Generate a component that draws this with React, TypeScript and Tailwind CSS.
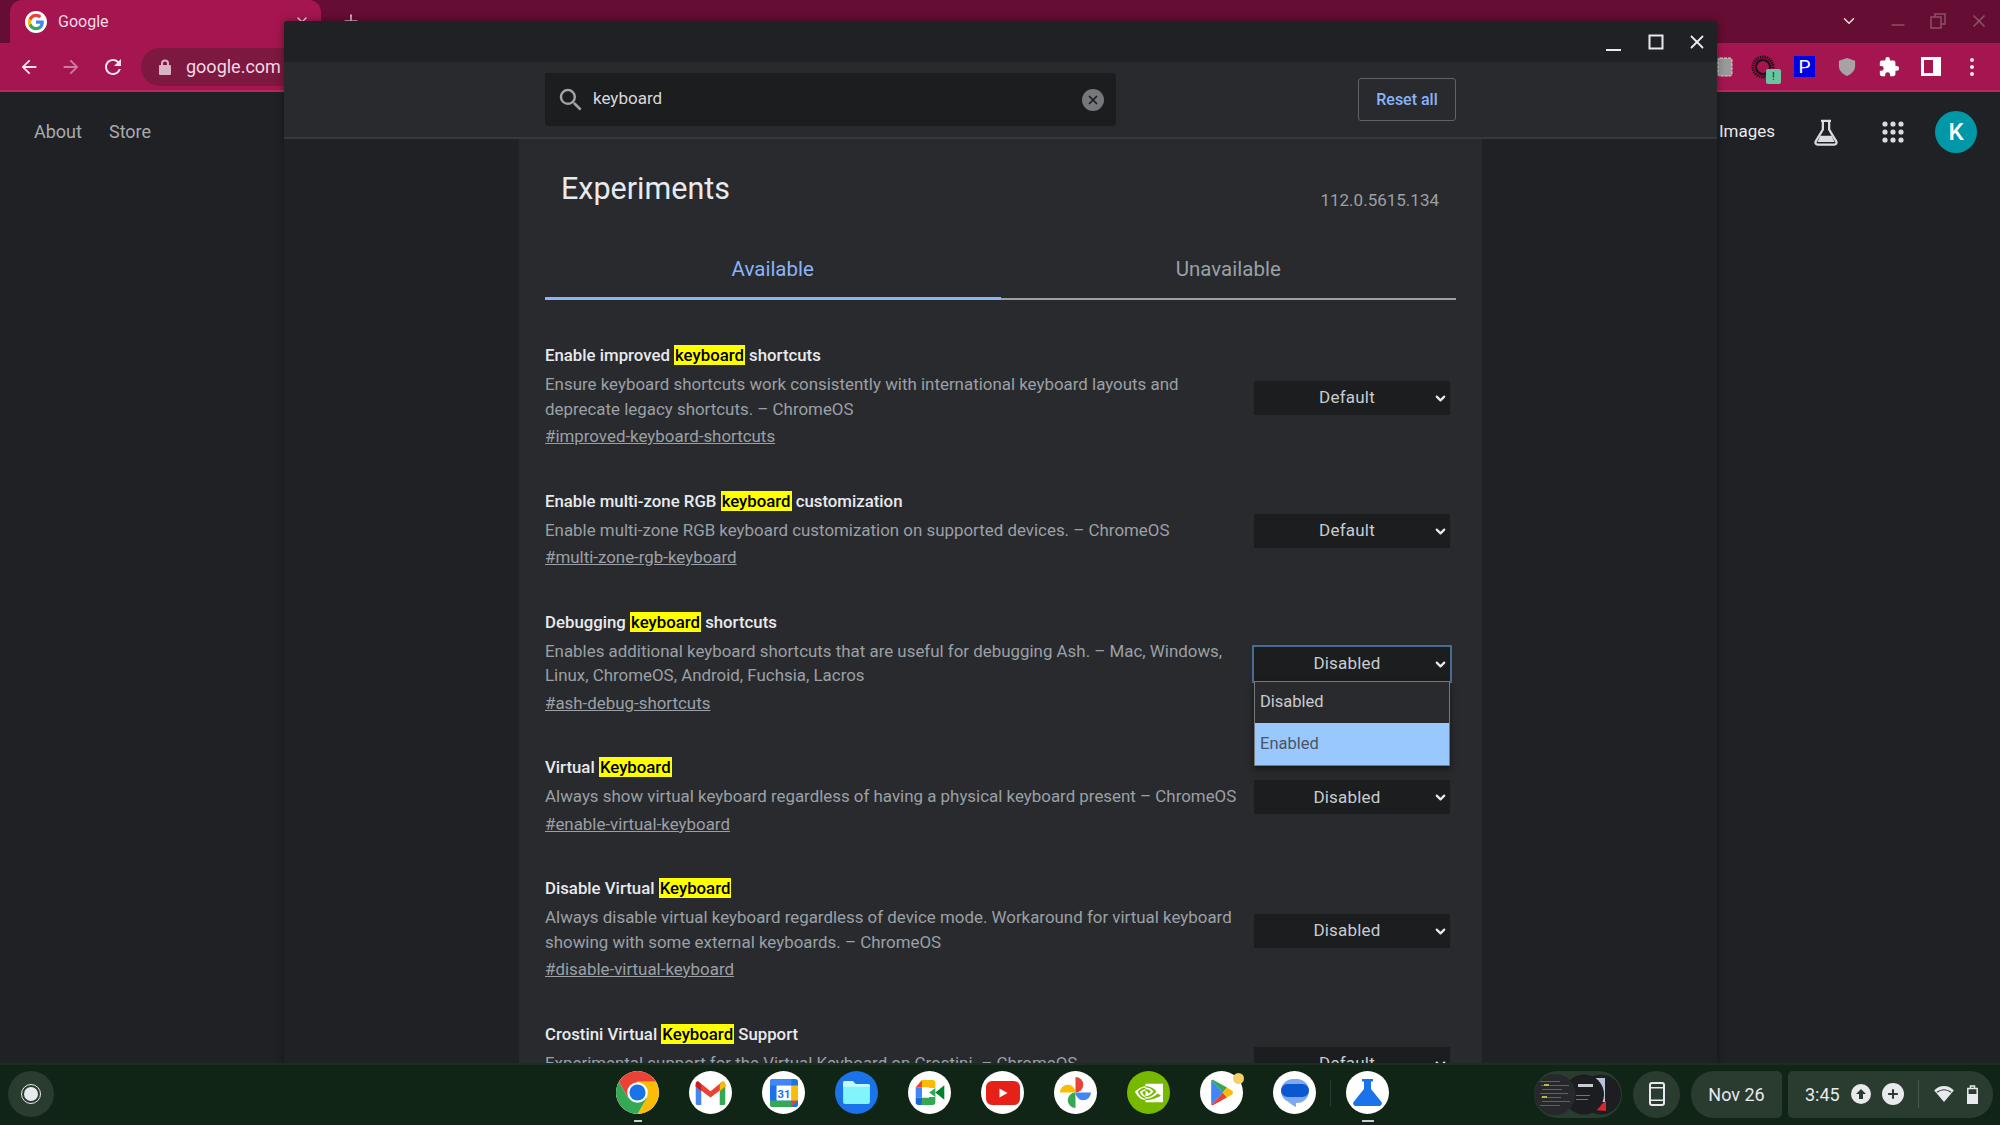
import React from "react";
import { ChevronDown, Minus, Plus, X } from "lucide-react";
import { SiNvidia } from "react-icons/si";

const experiments = [
  {
    before: "Enable improved ",
    mark: "keyboard",
    after: " shortcuts",
    desc: "Ensure keyboard shortcuts work consistently with international keyboard layouts and deprecate legacy shortcuts. – ChromeOS",
    link: "#improved-keyboard-shortcuts",
    value: "Default",
  },
  {
    before: "Enable multi-zone RGB ",
    mark: "keyboard",
    after: " customization",
    desc: "Enable multi-zone RGB keyboard customization on supported devices. – ChromeOS",
    link: "#multi-zone-rgb-keyboard",
    value: "Default",
  },
  {
    before: "Debugging ",
    mark: "keyboard",
    after: " shortcuts",
    desc: "Enables additional keyboard shortcuts that are useful for debugging Ash. – Mac, Windows, Linux, ChromeOS, Android, Fuchsia, Lacros",
    link: "#ash-debug-shortcuts",
    value: "Disabled",
    open: true,
  },
  {
    before: "Virtual ",
    mark: "Keyboard",
    after: "",
    desc: "Always show virtual keyboard regardless of having a physical keyboard present – ChromeOS",
    link: "#enable-virtual-keyboard",
    value: "Disabled",
  },
  {
    before: "Disable Virtual ",
    mark: "Keyboard",
    after: "",
    desc: "Always disable virtual keyboard regardless of device mode. Workaround for virtual keyboard showing with some external keyboards. – ChromeOS",
    link: "#disable-virtual-keyboard",
    value: "Disabled",
  },
  {
    before: "Crostini Virtual ",
    mark: "Keyboard",
    after: " Support",
    desc: "Experimental support for the Virtual Keyboard on Crostini. – ChromeOS",
    link: "#crostini-virtual-keyboard",
    value: "Default",
  },
];

function GoogleG({ size = 22 }: { size?: number }) {
  return (
    <svg width={size} height={size} viewBox="0 0 48 48">
      <circle cx="24" cy="24" r="24" fill="#fff" />
      <path fill="#4285F4" d="M41 24.400c0-1.300-.1-2.500-.3-3.700H24v7h9.600c-.4 2.200-1.700 4.100-3.500 5.400v4.500h5.700C39.100 34.500 41 29.900 41 24.400z" />
      <path fill="#34A853" d="M24 42c4.800 0 8.800-1.600 11.800-4.300l-5.700-4.500c-1.600 1.100-3.700 1.700-6.100 1.700-4.700 0-8.600-3.100-10-7.400H8.100v4.600C11 37.900 17 42 24 42z" />
      <path fill="#FBBC05" d="M14 27.500c-.4-1.100-.6-2.300-.6-3.500s.2-2.400.6-3.500v-4.600H8.100C6.800 18.300 6 21.100 6 24s.8 5.700 2.100 8.100l5.900-4.600z" />
      <path fill="#EA4335" d="M24 13.100c2.600 0 5 .9 6.800 2.700l5.100-5.100C32.800 7.800 28.800 6 24 6 17 6 11 10.100 8.100 15.900l5.900 4.600c1.400-4.300 5.300-7.400 10-7.400z" />
    </svg>
  );
}

function ShelfIcon({ children, bg = "bg-white" }: { children: React.ReactNode; bg?: string }) {
  return (
    <div className={`flex h-[43px] w-[43px] shrink-0 items-center justify-center overflow-hidden rounded-full ${bg}`}>
      {children}
    </div>
  );
}

function ChromeIcon() {
  return (
    <svg width="43" height="43" viewBox="0 0 48 48">
      <path fill="#EA4335" d="M3.200 12A24 24 0 0 1 44.800 12H24L13.600 30z" />
      <path fill="#FBBC05" d="M44.800 12A24 24 0 0 1 24 48L34.400 30 24 12z" />
      <path fill="#34A853" d="M24 48A24 24 0 0 1 3.200 12L13.600 30H34.400z" />
      <circle cx="24" cy="24" r="11.500" fill="#fff" />
      <circle cx="24" cy="24" r="9" fill="#1A73E8" />
    </svg>
  );
}

function GmailIcon() {
  return (
    <svg width="31" height="24" viewBox="0 0 32 26">
      <path fill="#4285F4" d="M0 4h6v22H2a2 2 0 0 1-2-2z" />
      <path fill="#34A853" d="M26 4h6v20a2 2 0 0 1-2 2h-4z" />
      <path fill="#EA4335" d="M0 3 3 .5 16 11 29 .5 32 3v3L16 18 0 6z" />
      <path fill="#FBBC05" d="M26 4l3-3.500C30.500-.5 32 1 32 3v3l-6 5z" />
      <path fill="#C5221F" d="M0 3C0 1 1.500-.5 3 .5L6 4v7L0 6z" />
    </svg>
  );
}

function CalendarIcon() {
  return (
    <svg width="28" height="28" viewBox="0 0 30 30">
      <rect x="0" y="0" width="30" height="30" rx="3" fill="#1A73E8" />
      <path fill="#34A853" d="M0 23h23v7H3a3 3 0 0 1-3-3z" />
      <path fill="#EA4335" d="M23 23h7l-7 7z" />
      <path fill="#FBBC05" d="M23 7h7v16h-7z" />
      <path fill="#4285F4" d="M0 3a3 3 0 0 1 3-3h20v7H0z" />
      <rect x="7" y="7" width="16" height="16" fill="#fff" />
      <text x="15" y="20" textAnchor="middle" fontFamily="Roboto" fontWeight="700" fontSize="12" fill="#1A73E8">31</text>
    </svg>
  );
}

function FilesIcon() {
  return (
    <svg width="27" height="23" viewBox="0 0 28 24">
      <path fill="#80F6FB" d="M2 0h8l3 3h13a2 2 0 0 1 2 2v17a2 2 0 0 1-2 2H2a2 2 0 0 1-2-2V2a2 2 0 0 1 2-2z" />
      <path fill="#C4FBFD" d="M2 0h8l3 3h13a2 2 0 0 1 2 2v1H0V2a2 2 0 0 1 2-2z" />
    </svg>
  );
}

function MeetIcon() {
  return (
    <svg width="30" height="25" viewBox="0 0 32 28">
      <path fill="#EA4335" d="M7 0v8H0z" />
      <path fill="#4285F4" d="M0 8h7v12H0z" />
      <path fill="#1967D2" d="M0 20h7v8H3a3 3 0 0 1-3-3z" />
      <path fill="#FBBC05" d="M7 0h12a3 3 0 0 1 3 3v6h-7V8H7z" />
      <path fill="#34A853" d="M7 20h8v-1h7v6a3 3 0 0 1-3 3H7z" />
      <path fill="#00832D" d="M22 14l10-8v16z" />
      <path fill="#34A853" d="M15 14l7-5v10z" />
    </svg>
  );
}

function YoutubeIcon() {
  return (
    <svg width="34" height="24" viewBox="0 0 34 24">
      <rect width="34" height="24" rx="6" fill="#E62117" />
      <path d="M13.500 7.500v9l8-4.500z" fill="#fff" />
    </svg>
  );
}

function PhotosIcon() {
  return (
    <svg width="31" height="31" viewBox="0 0 32 32">
      <path fill="#FBBC04" d="M0 16a8 8 0 0 1 16 0z" />
      <path fill="#EA4335" d="M16 0a8 8 0 0 1 0 16z" />
      <path fill="#4285F4" d="M32 16a8 8 0 0 1-16 0z" />
      <path fill="#34A853" d="M16 32a8 8 0 0 1 0-16z" />
    </svg>
  );
}

function PlayIcon() {
  return (
    <svg width="24" height="27" viewBox="0 0 26 30">
      <path fill="#4285F4" d="M1 1.500v27L14 15z" />
      <path fill="#34A853" d="M1 1.500c.6-.8 1.500-1 2.500-.5L18.500 9.500 14 15z" />
      <path fill="#EA4335" d="M1 28.500c.6.800 1.500 1 2.500.5l15-8.500L14 15z" />
      <path fill="#FBBC04" d="M18.500 9.500l5.500 3.200c1.700 1 1.700 3.600 0 4.600l-5.500 3.200L14 15z" />
    </svg>
  );
}

function MessagesIcon() {
  return (
    <svg width="28" height="28" viewBox="0 0 28 28">
      <path fill="#7FA8F2" d="M12 0h4a12 12 0 0 1 12 12 12 12 0 0 1-12 12h-1v4c-3-1.500-6-3.500-8-5.500C3 21 0 17 0 12A12 12 0 0 1 12 0z" />
      <rect x="0" y="5" width="28" height="13" rx="6.500" fill="#0B57D0" />
    </svg>
  );
}

function FlaskIcon() {
  return (
    <svg width="29" height="27" viewBox="0 0 29 27">
      <path fill="#1A73E8" d="M9 0h11v2.500h-2V10l10.500 13c1 1.500 0 4-2 4H2.500c-2 0-3-2.500-2-4L11 10V2.500H9z" />
    </svg>
  );
}

function OverviewThumb() {
  return (
    <svg width="88" height="47" viewBox="0 0 88 47">
      <rect width="88" height="47" rx="23.500" fill="#2a3b30" />
      <circle cx="67" cy="23.500" r="20" fill="#1d1e21" />
      <rect x="62" y="7" width="9" height="24" fill="#b9c4dc" />
      <path d="M60 39l12-9v10z" fill="#d7262c" />
      <circle cx="50" cy="23.500" r="20" fill="#1c1d20" />
      <circle cx="21" cy="23.500" r="20.500" fill="#26282b" />
      {[10, 14, 18, 22, 26, 30, 34].map((y, i) => (
        <rect key={y} x={6 + (i % 3)} y={y} width={20 + (i % 2) * 8} height="1" fill="#5f6267" />
      ))}
      <rect x="10" y="13" width="5" height="2" fill="#b8b84a" />
      <rect x="8" y="25" width="5" height="2" fill="#b8b84a" />
      <rect x="44" y="13" width="15" height="3" fill="#c8cbd0" />
      <rect x="42" y="24" width="14" height="1" fill="#70737a" />
      <rect x="42" y="28" width="12" height="1" fill="#70737a" />
    </svg>
  );
}

function SelectBox({ value, open }: { value: string; open?: boolean }) {
  return (
    <div className={`relative mr-[6px] mt-[6px] flex h-[34px] w-[196px] shrink-0 items-center justify-center bg-[#1c1d1f] pr-[10px] text-[17px] tracking-[0.2px] text-[#c9ccd0] ${open ? "outline-2 outline-[#4a6a96]" : ""}`}>
      {value}
      <ChevronDown size={15} strokeWidth={3.5} className="absolute right-[2px] top-[10px] text-[#e8eaed]" />
      {open && (
        <div className="absolute left-0 top-[34px] z-10 w-[196px] border border-[#77787a] text-[16.5px] tracking-normal shadow-[0_3px_6px_rgba(0,0,0,0.5)]">
          <div className="flex h-[41px] items-center bg-[#292a2d] pl-[5px] text-[#c9ccd0]">Disabled</div>
          <div className="flex h-[42px] items-center bg-[#99c8ff] pl-[5px] text-[#4b5563]">Enabled</div>
        </div>
      )}
    </div>
  );
}

export default function App() {
  return (
    <div className="relative flex h-[1125px] w-[2000px] flex-col overflow-hidden bg-[#202124] font-['Roboto',sans-serif]">
      {/* tab strip */}
      <div className="flex h-[43px] shrink-0 items-end bg-[#650d33] pl-[10px]">
        <div className="flex h-[43px] w-[311px] items-center rounded-t-[12px] bg-[#a51650] pl-[15px] text-[16px] text-[#f3d9e3]">
          <GoogleG />
          <span className="ml-[11px]">Google</span>
          <X size={16} className="ml-auto mr-[11px] text-[#f3d9e3]" />
        </div>
        <Plus size={20} className="mb-[12px] ml-[20px] text-[#e2bccb]" />
        <div className="ml-auto mb-[8px] flex items-center pr-[11px] text-[#8c4f69]">
          <ChevronDown size={18} className="text-[#f3d9e3]" />
          <Minus size={20} className="ml-[30px] mt-[8px]" />
          <svg width="16" height="16" viewBox="0 0 16 16" fill="none" stroke="currentColor" strokeWidth="1.500" className="ml-[22px]">
            <rect x="1" y="4" width="10" height="11" />
            <path d="M5 4V1h10v10h-4" />
          </svg>
          <X size={20} className="ml-[23px]" />
        </div>
      </div>

      {/* toolbar */}
      <div className="flex h-[49px] shrink-0 items-center border-b-2 border-[#b6285f] bg-[#a51650] pl-[18px] pr-[25px] text-[#f6e6ec]">
        <svg width="22" height="22" viewBox="0 0 24 24" fill="currentColor">
          <path d="M20 11H7.830l5.590-5.590L12 4l-8 8 8 8 1.410-1.410L7.830 13H20v-2z" />
        </svg>
        <svg width="22" height="22" viewBox="0 0 24 24" fill="#cf7b9d" className="ml-[20px]">
          <path d="M12 4l-1.410 1.410L16.170 11H4v2h12.170l-5.580 5.590L12 20l8-8z" />
        </svg>
        <svg width="24" height="24" viewBox="0 0 24 24" fill="currentColor" className="ml-[19px]">
          <path d="M17.650 6.350A7.958 7.958 0 0 0 12 4c-4.420 0-7.990 3.580-7.990 8s3.570 8 7.990 8c3.730 0 6.840-2.550 7.730-6h-2.080A5.990 5.990 0 0 1 12 18c-3.310 0-6-2.690-6-6s2.690-6 6-6c1.660 0 3.140.69 4.220 1.780L13 11h7V4l-2.350 2.350z" />
        </svg>
        <div className="ml-[16px] flex h-[38px] w-[300px] items-center rounded-full bg-[#7d1840] pl-[17px] text-[18px] text-[#f3d9e3]">
          <svg width="14" height="16" viewBox="0 0 14 16" fill="#d9b3c3">
            <path d="M3 6V4.500a4 4 0 0 1 8 0V6h1a1 1 0 0 1 1 1v8a1 1 0 0 1-1 1H2a1 1 0 0 1-1-1V7a1 1 0 0 1 1-1zm2 0h4V4.500a2 2 0 0 0-4 0z" />
          </svg>
          <span className="ml-[14px]">google.com</span>
        </div>
        <div className="ml-auto flex items-center">
          <svg width="16" height="20" viewBox="0 0 16 20">
            <rect x="1" y="1" width="14" height="18" rx="2" fill="#9a9a9a" stroke="#d5d5d5" strokeDasharray="3 1" />
          </svg>
          <div className="relative ml-[17px] h-[26px] w-[26px]">
            <svg width="26" height="26" viewBox="0 0 26 26" fill="none">
              <circle cx="13" cy="13" r="10" stroke="#1c0b12" strokeWidth="3" strokeDasharray="1.300 1" />
              <circle cx="13" cy="13" r="7" stroke="#1c0b12" strokeWidth="2" />
            </svg>
            <span className="absolute bottom-[-4px] right-[-5px] flex h-[15px] w-[15px] items-center justify-center rounded-[2px] bg-[#6ac4a3] text-[11px] leading-none text-[#18362b]">!</span>
          </div>
          <div className="ml-[18px] flex h-[21px] w-[21px] items-center justify-center bg-[#0000e0] text-[19px] leading-none text-white">P</div>
          <svg width="18" height="18" viewBox="0 0 18 20" fill="#a7a2a4" className="ml-[23px]">
            <path d="M9 0l9 3v6c0 5-4 9-9 11-5-2-9-6-9-11V3z" />
          </svg>
          <svg width="22" height="22" viewBox="0 0 24 24" fill="#fff" className="ml-[22px]">
            <path d="M20.500 11H19V7a2 2 0 0 0-2-2h-4V3.500a2.500 2.500 0 0 0-5 0V5H4a2 2 0 0 0-2 2v3.800h1.500a2.700 2.700 0 0 1 0 5.400H2V20a2 2 0 0 0 2 2h3.800v-1.500a2.700 2.700 0 0 1 5.400 0V22H17a2 2 0 0 0 2-2v-4h1.500a2.500 2.500 0 0 0 0-5z" />
          </svg>
          <svg width="20" height="19" viewBox="0 0 20 19" className="ml-[21px]">
            <path fill="#fff" fillRule="evenodd" d="M0 0h20v19H0zM3 3v13h9V3z" />
          </svg>
          <svg width="6" height="20" viewBox="0 0 6 20" fill="#f6e6ec" className="ml-[28px]">
            <circle cx="3" cy="3" r="2" />
            <circle cx="3" cy="10" r="2" />
            <circle cx="3" cy="17" r="2" />
          </svg>
        </div>
      </div>

      {/* page behind the dialog */}
      <div className="flex flex-1 items-start pl-[34px] pr-[23px] pt-[18px] text-[18px]">
        <div className="flex h-[42px] items-center gap-[27px] text-[#a8abb0]">
          <span>About</span>
          <span>Store</span>
        </div>
        <div className="ml-auto mt-[1px] flex h-[42px] items-center text-[#e8eaed]">
          <span className="text-[17px]">Images</span>
          <svg width="30" height="30" viewBox="0 0 24 24" fill="none" className="ml-[36px]">
            <path stroke="#dadce0" strokeWidth="1.800" d="M8 3h8M9.500 3v7L3.800 19.500C3 21 4 22 5.300 22h13.400c1.300 0 2.300-1 1.500-2.500L14.500 10V3" />
            <path fill="#dadce0" d="M7.500 15h9l2.300 5H5.200z" />
          </svg>
          <svg width="22" height="22" viewBox="0 0 22 22" fill="#dadce0" className="ml-[41px]">
            {[3, 11, 19].flatMap((y) =>
              [3, 11, 19].map((x) => <circle key={`${x}-${y}`} cx={x} cy={y} r="2.600" />)
            )}
          </svg>
          <div className="ml-[31px] flex h-[42px] w-[42px] items-center justify-center rounded-full bg-[#0097a7] text-[24px] font-medium text-white">K</div>
        </div>
      </div>

      {/* flags window */}
      <div className="absolute left-[284px] top-[21px] flex h-[1042px] w-[1433px] flex-col overflow-hidden rounded-t-[3px] bg-[#202124] shadow-[0_0_8px_rgba(0,0,0,0.4)]">
        <div className="flex h-[41px] shrink-0 items-center justify-end pr-[9px] text-[#e8eaed]">
          <svg width="16" height="16" viewBox="0 0 16 16" className="mt-[6px]">
            <rect x="0" y="12" width="15" height="2" fill="currentColor" />
          </svg>
          <svg width="16" height="16" viewBox="0 0 16 16" fill="none" stroke="currentColor" strokeWidth="2" className="ml-[26px]">
            <rect x="1.500" y="1.500" width="13" height="13" />
          </svg>
          <X size={22} strokeWidth={2} className="ml-[22px]" />
        </div>

        <div className="flex h-[77px] shrink-0 items-start border-b-2 border-[#37383b] bg-[#292a2d] pl-[261px] pt-[11px]">
          <div className="flex h-[53px] w-[571px] items-center rounded-[3px] bg-[#1c1d1f] pl-[11px] pr-[12px] text-[17px] text-[#d7d9dc]">
            <svg width="30" height="30" viewBox="0 0 24 24" fill="#a0a3a8">
              <path d="M15.500 14h-.790l-.280-.270A6.471 6.471 0 0 0 16 9.500 6.500 6.500 0 1 0 9.500 16c1.610 0 3.090-.590 4.230-1.570l.270.280v.790l5 4.990L20.490 19l-4.990-5zm-6 0C7.010 14 5 11.990 5 9.500S7.010 5 9.500 5 14 7.010 14 9.500 11.990 14 9.500 14z" />
            </svg>
            <span className="ml-[7px] mb-[2px]">keyboard</span>
            <div className="ml-auto flex h-[22px] w-[22px] items-center justify-center rounded-full bg-[#75777b]">
              <X size={14} strokeWidth={3} className="text-[#1c1d1f]" />
            </div>
          </div>
          <div className="ml-[242px] mt-[5px] flex h-[43px] w-[98px] items-center justify-center rounded-[3px] border border-[#5f6368] text-[16px] font-medium text-[#8ab4f8]">
            Reset all
          </div>
        </div>

        <div className="ml-[235px] flex-1 w-[963px] overflow-hidden bg-[#292a2d] px-[26px]">
          <div className="flex items-start justify-between pl-[16px] pr-[17px] pt-[30px]">
            <h1 className="text-[30.500px] leading-[40px] text-[#e8eaed]">Experiments</h1>
            <span className="mt-[19px] text-[17px] leading-[24px] text-[#9aa0a6]">112.0.5615.134</span>
          </div>
          <div className="mt-[32px] grid grid-cols-2 text-[20.500px]">
            <div className="flex h-[56px] items-center justify-center border-b-[3px] border-[#8ab4f8] pb-[2px] text-[#8ab4f8]">Available</div>
            <div className="flex h-[56px] items-center justify-center border-b-2 border-[#9aa0a6] pb-[3px] text-[#9aa0a6]">Unavailable</div>
          </div>
          <div className="mt-[41px]">
            {experiments.map((exp) => (
              <div key={exp.before} className="flex items-center justify-between pb-[38.500px]">
                <div className="w-[700px]">
                  <div className="text-[16.800px] font-medium leading-[28px] text-[#e8eaed]">
                    {exp.before}
                    <mark className="bg-[#ffff00] px-px text-black">{exp.mark}</mark>
                    {exp.after}
                  </div>
                  <p className="mt-[3px] text-[16.900px] leading-[24.500px] text-[#9aa0a6]">{exp.desc}</p>
                  <a className="mt-[3px] block text-[16.900px] leading-[24px] text-[#9aa0a6] underline">{exp.link}</a>
                </div>
                <SelectBox value={exp.value} open={exp.open} />
              </div>
            ))}
          </div>
        </div>
      </div>

      {/* shelf */}
      <div className="relative z-20 flex h-[62px] shrink-0 items-center border-t-2 border-[#17301f] bg-[#112516] pb-[2px] pl-[8px] pr-[7px]">
        <div className="flex h-[46px] w-[46px] items-center justify-center rounded-full bg-[#2a3b30]">
          <div className="flex h-[20px] w-[20px] items-center justify-center rounded-full border border-[#e8eaed]">
            <div className="h-[14px] w-[14px] rounded-full bg-[#e8eaed]" />
          </div>
        </div>
        <div className="relative mb-[3px] ml-[562px] flex items-center gap-[30px]">
          <ShelfIcon><ChromeIcon /></ShelfIcon>
          <ShelfIcon><GmailIcon /></ShelfIcon>
          <ShelfIcon><CalendarIcon /></ShelfIcon>
          <ShelfIcon bg="bg-[#1a73e8]"><FilesIcon /></ShelfIcon>
          <ShelfIcon><MeetIcon /></ShelfIcon>
          <ShelfIcon><YoutubeIcon /></ShelfIcon>
          <ShelfIcon><PhotosIcon /></ShelfIcon>
          <ShelfIcon bg="bg-[#76b900]"><SiNvidia size={28} className="text-white" /></ShelfIcon>
          <div className="relative">
            <ShelfIcon><PlayIcon /></ShelfIcon>
            <span className="absolute right-[-1px] top-[2px] h-[11px] w-[11px] rounded-full bg-[#f6cf65]" />
          </div>
          <ShelfIcon><MessagesIcon /></ShelfIcon>
          <ShelfIcon><FlaskIcon /></ShelfIcon>
          <span className="absolute bottom-[-8px] left-[18px] h-[2px] w-[8px] bg-[#c8cbd0]" />
          <span className="absolute bottom-[-8px] right-[15px] h-[2px] w-[12px] bg-[#c8cbd0]" />
          <span className="absolute right-[58px] top-[9px] h-[26px] w-px bg-[#2a3b30]" />
        </div>
        <div className="ml-auto flex h-[47px] items-center text-[#e8eaed]">
          <OverviewThumb />
          <div className="ml-[11px] flex h-[47px] w-[47px] items-center justify-center rounded-full bg-[#2a3b30]">
            <svg width="16" height="24" viewBox="0 0 16 24" fill="none">
              <rect x="1" y="1" width="14" height="22" rx="2" stroke="#e8eaed" strokeWidth="2" />
              <rect x="1" y="5" width="14" height="1.500" fill="#e8eaed" />
              <rect x="1" y="17.500" width="14" height="1.500" fill="#e8eaed" />
            </svg>
          </div>
          <div className="ml-[11px] flex h-[47px] w-[91px] items-center justify-center rounded-l-[23px] rounded-r-[5px] bg-[#2a3b30] text-[18px]">Nov 26</div>
          <div className="ml-[6px] flex h-[47px] w-[205px] items-center rounded-l-[5px] rounded-r-[23px] bg-[#2a3b30] pl-[17px] text-[18px]">
            <span>3:45</span>
            <div className="ml-[11px] flex h-[20px] w-[20px] items-center justify-center rounded-full bg-[#e8eaed]">
              <svg width="12" height="12" viewBox="0 0 12 12" fill="#2a3b30"><path d="M6 1l5 5H8v5H4V6H1z" /></svg>
            </div>
            <div className="ml-[11px] flex h-[22px] w-[22px] items-center justify-center rounded-full bg-[#e8eaed]">
              <Plus size={14} strokeWidth={3.5} className="text-[#2a3b30]" />
            </div>
            <span className="ml-[14px] h-[28px] w-px bg-[#46574c]" />
            <svg width="20" height="16" viewBox="0 0 22 18" className="ml-[15px]">
              <path fill="#e8eaed" d="M11 18 0 5c6-6.500 16-6.500 22 0z" />
              <path fill="none" stroke="#2a3b30" strokeWidth="1.200" d="M3 7c5-3.500 11-3.500 16 0" />
            </svg>
            <svg width="11" height="19" viewBox="0 0 11 19" className="ml-[13px]">
              <path fill="none" stroke="#e8eaed" strokeWidth="1.500" d="M.8 3.500h9.400v14.700H.8zM3.500 3.500V1h4v2.500" />
              <rect x="0" y="9" width="11" height="10" rx="1" fill="#e8eaed" />
            </svg>
          </div>
        </div>
      </div>
    </div>
  );
}
